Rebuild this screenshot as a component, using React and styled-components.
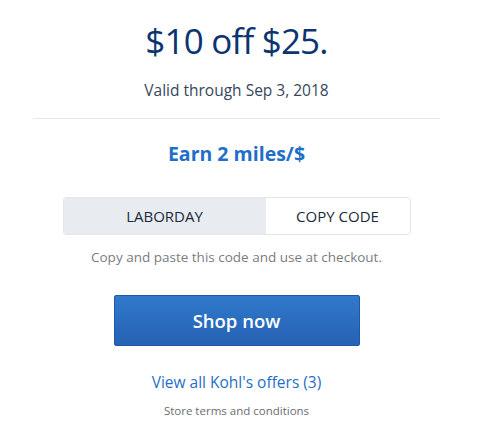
import styled, { createGlobalStyle } from 'styled-components'

const GlobalStyle = createGlobalStyle`
  * {
    box-sizing: border-box;
  }

  body {
    margin: 0;
    background: #fff;
    font-family: 'Open Sans', 'Noto Sans', sans-serif;
  }
`

const Offer = styled.main`
  width: 407px;
  margin-left: 33px;
  padding-top: 16px;
  display: flex;
  flex-direction: column;
  align-items: center;
  text-align: center;
`

const Title = styled.h1`
  margin: 0;
  font-size: 35px;
  font-weight: 400;
  line-height: 50px;
  letter-spacing: -0.8px;
  color: #0b3470;
`

const Valid = styled.p`
  margin: 13px 0 0;
  font-size: 15.5px;
  line-height: 22px;
  color: #36475a;
`

const Divider = styled.hr`
  align-self: stretch;
  margin: 17px 0 0;
  border: 0;
  border-top: 1px solid #e4e7eb;
`

const Earn = styled.h2`
  margin: 22px 0 0;
  font-size: 19.5px;
  font-weight: 700;
  line-height: 26px;
  color: #1f6fc8;
`

const CodeBox = styled.div`
  margin-top: 30px;
  width: 348px;
  height: 38px;
  display: flex;
  border: 1px solid #e3e6ea;
  border-radius: 3px;
  overflow: hidden;
`

const CodeCell = styled.div`
  flex: ${p => (p.$wide ? '0 0 202px' : '1')};
  display: flex;
  align-items: center;
  justify-content: center;
  background: ${p => (p.$filled ? '#e8ebef' : '#fff')};
  font-size: 15px;
  color: #1b2a3c;
  text-transform: uppercase;
`

const Hint = styled.p`
  margin: 12px 0 0;
  font-size: 13.5px;
  line-height: 20px;
  color: #7a7d80;
`

const ShopButton = styled.button`
  margin-top: 28px;
  width: 246px;
  height: 51px;
  border: 1px solid #1e58a8;
  border-radius: 2px;
  background: linear-gradient(#3179cc, #2562b3);
  color: #fff;
  font-family: inherit;
  font-size: 18.5px;
  font-weight: 600;
  cursor: pointer;
`

const OffersLink = styled.a`
  margin-top: 25px;
  font-size: 15.5px;
  line-height: 22px;
  color: #1f6fc8;
  text-decoration: none;
`

const Terms = styled.a`
  margin-top: 10px;
  font-size: 11.5px;
  line-height: 16px;
  color: #6a6d70;
  text-decoration: none;
`

export default function App() {
  return (
    <>
      <GlobalStyle />
      <Offer>
        <Title>$10 off $25.</Title>
        <Valid>Valid through Sep 3, 2018</Valid>
        <Divider />
        <Earn>Earn 2 miles/$</Earn>
        <CodeBox>
          <CodeCell $wide $filled>LABORDAY</CodeCell>
          <CodeCell>Copy code</CodeCell>
        </CodeBox>
        <Hint>Copy and paste this code and use at checkout.</Hint>
        <ShopButton>Shop now</ShopButton>
        <OffersLink href="#">View all Kohl's offers (3)</OffersLink>
        <Terms href="#">Store terms and conditions</Terms>
      </Offer>
    </>
  )
}
